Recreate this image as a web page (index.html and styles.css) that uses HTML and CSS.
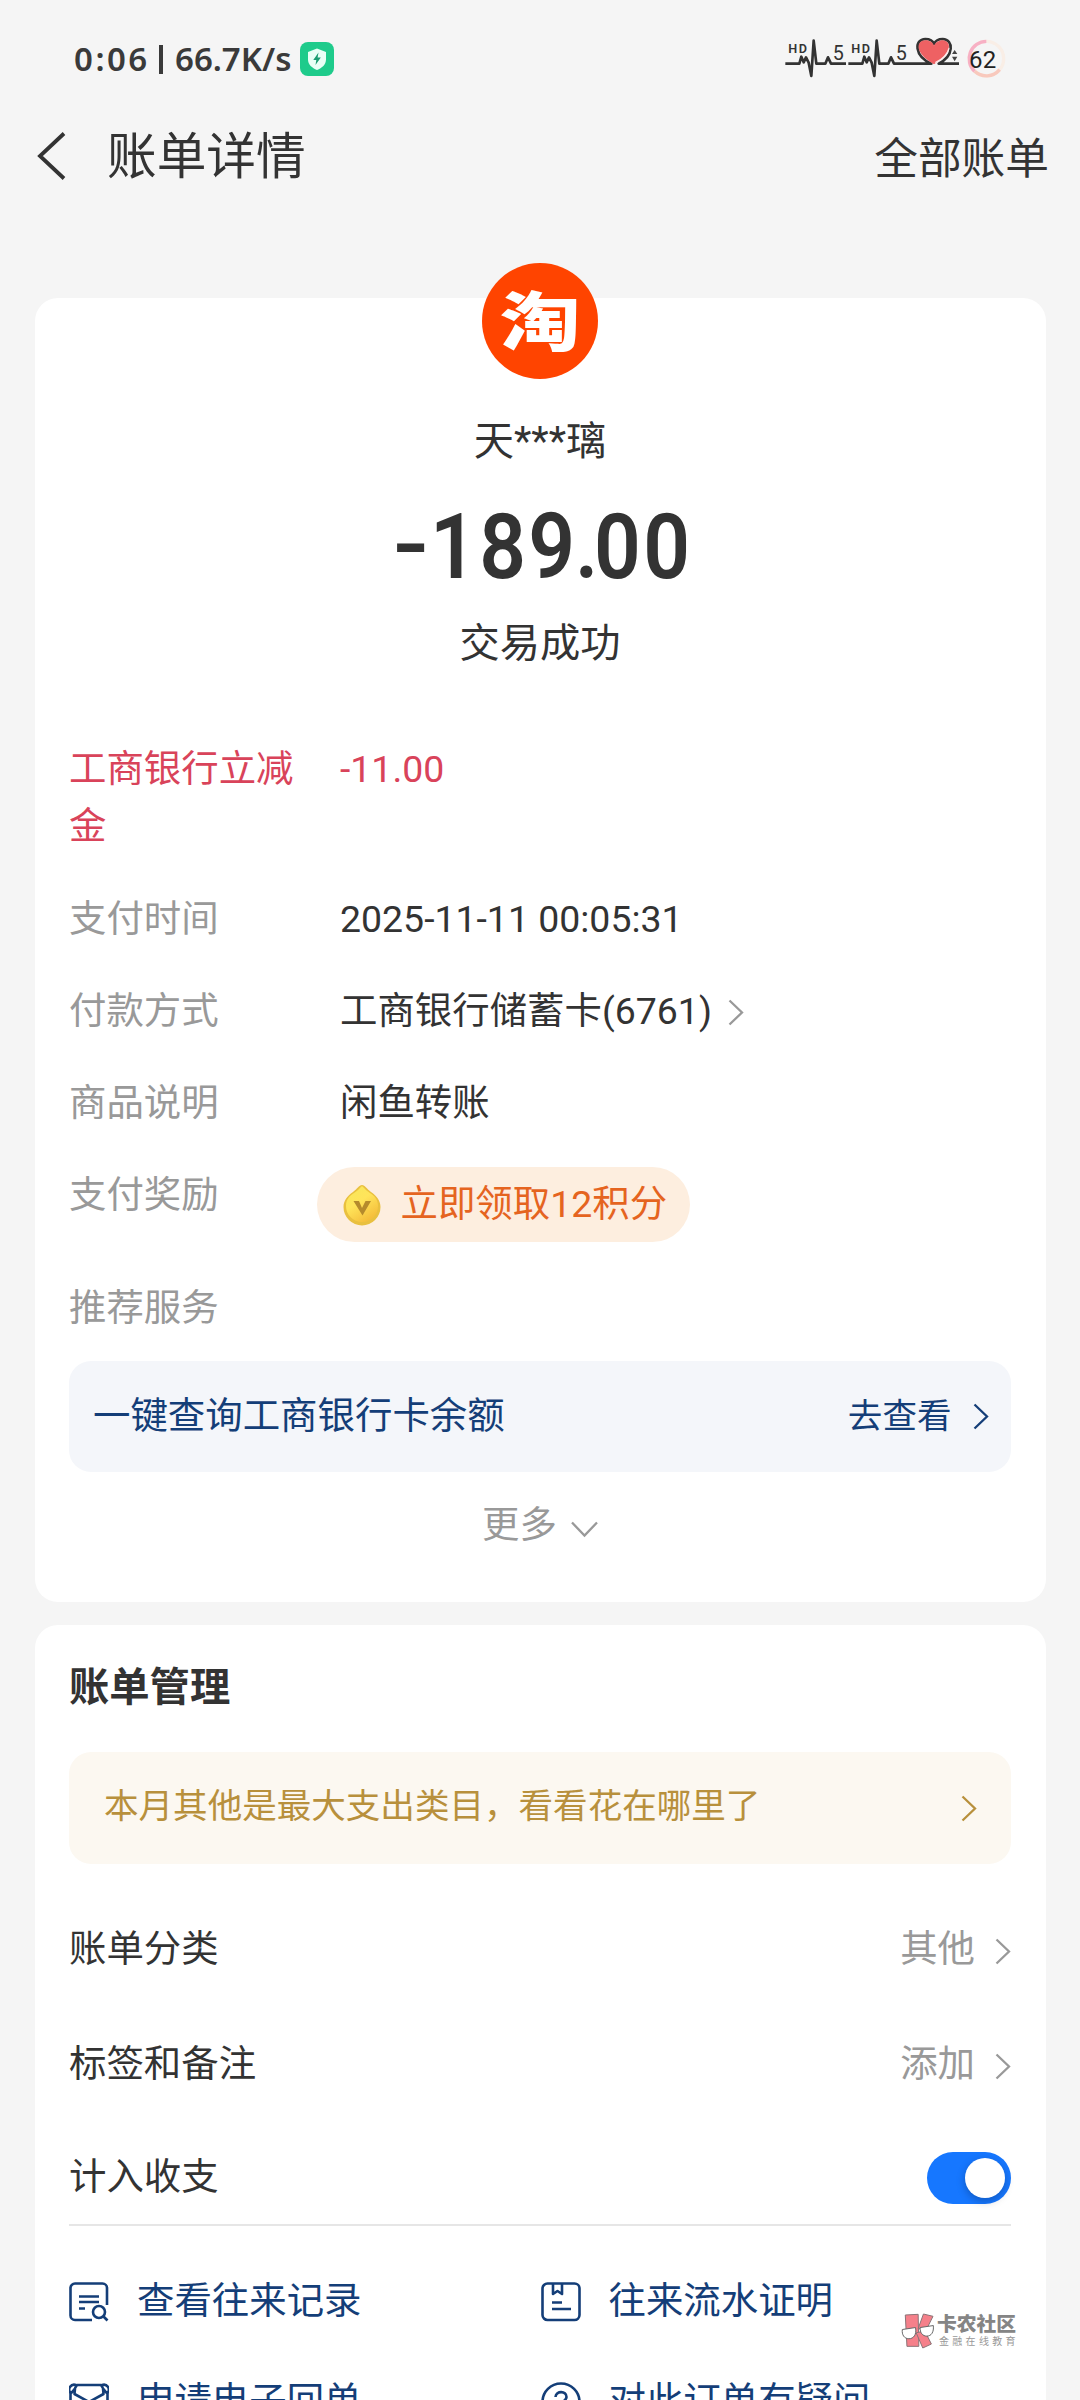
FILE: index.html
```html
<!DOCTYPE html>
<html lang="zh-CN">
<head>
<meta charset="utf-8">
<title>账单详情</title>
<link rel="stylesheet" href="styles.css">
</head>
<body>
<div class="screen">
  <div class="statusbar">
    <div class="status-left">
      <span class="clock">0:06</span><span class="sep"></span><span class="speed">66.7K/s</span>
      <svg class="shield" viewBox="0 0 34 34"><rect width="34" height="34" rx="8" fill="#1ecb8b"/><path d="M17 6.500L26 10V17.500C26 22.500 22 26 17 28C12 26 8 22.500 8 17.500V10Z" fill="#e9fff6"/><path d="M18.500 10.500L13.300 18H16.300L15.500 23L20.800 15.600H17.600Z" fill="#1a9d72"/></svg>
    </div>
    <svg class="signals" viewBox="120 90 690 159">
      <g fill="none" stroke="#333" stroke-width="8" stroke-linejoin="round">
        <path d="M136 191H178L184 170L191 187L198 172L206 188L214 228L221 122L229 191H256L264 172L273 191H318"/>
        <path d="M325 191H367L373 170L380 187L387 172L395 188L403 228L410 122L418 191H445L453 172L462 191H574C522 168 522 118 556 117C570 117 579 124 582 132C586 123 597 117 608 117C642 119 642 168 596 191H657"/>
      </g>
      <path d="M582 193C520 158 530 121 556 121C570 121 579 128 582 137C586 128 597 121 608 121C634 123 640 156 582 193Z" fill="#ee6163"/>
      <path d="M586 188C606 178 623 162 627 145" fill="none" stroke="#ffe9e9" stroke-width="4"/>
      <path d="M636 162L644 150L652 162ZM636 170H652L644 184Z" fill="#444"/>
      <g fill="none" stroke-width="10">
        <circle cx="739" cy="176" r="52" stroke="#f9eee6"/>
        <path d="M739 124A52 52 0 0 0 704 214" stroke="#f7b0c4"/>
        <path d="M704 214A52 52 0 0 0 779 209" stroke="#f8c9bd"/>
      </g>
      <g class="signal-text" fill="#333"><text x="145" y="159" font-size="38" font-weight="600" textLength="56">HD</text><text x="334" y="159" font-size="38" font-weight="600" textLength="56">HD</text><text x="278" y="181" font-size="59">5</text><text x="467" y="181" font-size="59">5</text><text x="687" y="204" font-size="72" fill="#222" textLength="82">62</text></g>
    </svg>
  </div>

  <div class="navbar">
    <svg class="back" viewBox="0 0 29 48"><path d="M27 1.500L3 24L27 46.500" fill="none" stroke="#333" stroke-width="3.800"/></svg>
    <h1 class="nav-title">账单详情</h1>
    <span class="nav-all">全部账单</span>
  </div>

  <section class="card bill">
    <div class="merchant-logo"><span>淘</span></div>
    <div class="merchant">天***璃</div>
    <div class="amount"><span class="minus">-</span><span class="digits">189</span><span class="dot">.</span><span class="digits">00</span></div>
    <div class="state">交易成功</div>

    <div class="details">
      <div class="row discount"><span class="label">工商银行立减金</span><span class="value">-11.00</span></div>
      <div class="row"><span class="label">支付时间</span><span class="value">2025-11-11 00:05:31</span></div>
      <div class="row"><span class="label">付款方式</span><span class="value">工商银行储蓄卡(6761)</span><svg class="chev gray pay-chev" viewBox="0 0 16 27"><path d="M1.500 1.500L14 13.500L1.500 25.500"/></svg></div>
      <div class="row"><span class="label">商品说明</span><span class="value">闲鱼转账</span></div>
      <div class="row reward"><span class="label">支付奖励</span>
        <div class="pill">
          <svg class="coin" viewBox="0 0 38 42"><defs><linearGradient id="gold" x1="0" y1="0" x2="0.600" y2="1"><stop offset="0" stop-color="#f6e75b"/><stop offset=".5" stop-color="#ffe45a"/><stop offset="1" stop-color="#f5bf3c"/></linearGradient></defs><path d="M19 1C22 1 24 5 28 8C34 12 37.500 17 37.500 23A18.500 18.500 0 0 1 .5 23C.5 17 4 12 10 8C14 5 16 1 19 1Z" fill="#e9c03f"/><path d="M19 2C22 5 24 7 27 9C32 12 35 16 35 22A16 16 0 0 1 3 22C3 16 6 12 11 9C14 7 16 5 19 2Z" fill="url(#gold)"/><path d="M10.500 17H16L19 24L22.500 17H28L19.500 31.500Z" fill="#b58a2c"/></svg>
          <span>立即领取12积分</span>
        </div>
      </div>
      <div class="row"><span class="label">推荐服务</span></div>
    </div>
    <div class="banner balance"><span class="balance-text">一键查询工商银行卡余额</span><span class="go">去查看</span><svg class="chev navy" viewBox="0 0 16 27"><path d="M1.500 1.500L14 13.500L1.500 25.500"/></svg></div>
    <div class="more"><span>更多</span><svg class="down" viewBox="0 0 27 17"><path d="M1 1.500L13.500 14.500L26 1.500"/></svg></div>
  </section>

  <section class="card manage">
    <h2 class="manage-title">账单管理</h2>
    <div class="banner insight"><span>本月其他是最大支出类目，看看花在哪里了</span><svg class="chev golden" viewBox="0 0 16 27"><path d="M1.500 1.500L14 13.500L1.500 25.500"/></svg></div>
    <div class="setting"><span>账单分类</span><span class="setting-value">其他</span><svg class="chev gray" viewBox="0 0 16 27"><path d="M1.500 1.500L14 13.500L1.500 25.500"/></svg></div>
    <div class="setting"><span>标签和备注</span><span class="setting-value">添加</span><svg class="chev gray" viewBox="0 0 16 27"><path d="M1.500 1.500L14 13.500L1.500 25.500"/></svg></div>
    <div class="setting last"><span>计入收支</span><span class="switch"><span class="knob"></span></span></div>
    <div class="links">
      <div class="link"><svg viewBox="0 0 40 40"><path d="M38 23V6A4.500 4.500 0 0 0 33.500 1.500H6A4.500 4.500 0 0 0 1.500 6V33.500A4.500 4.500 0 0 0 6 38H23M10 14.500H30M10 20H30M10 26.500H16"/><circle cx="30" cy="30" r="6"/><path d="M34.500 34.500L38.500 38.500"/></svg><span>查看往来记录</span></div>
      <div class="link"><svg viewBox="0 0 40 40"><rect x="1.500" y="1.500" width="37" height="36.500" rx="5"/><path d="M12 2V12L16.500 9L21 12V2M11 20.500H21M11 27H30"/></svg><span>往来流水证明</span></div>
      <div class="link"><svg viewBox="0 0 40 40"><path d="M6 6L8 3H32L34 6M1.500 12L6 6.500L5.500 12L20 20L34.500 12L34 6.500L38.500 12M1.500 9V33A4 4 0 0 0 5.500 37H34.500A4 4 0 0 0 38.500 33V9M1.500 11A5 5 0 0 1 7 3M38.500 11A5 5 0 0 0 33 3"/></svg><span>申请电子回单</span></div>
      <div class="link"><svg viewBox="0 0 40 40"><circle cx="20" cy="20" r="18.500"/><path d="M14.500 15C15 8.500 25.500 8.500 25.500 15C25.500 19 20 19 20 24M20 28V31"/></svg><span>对此订单有疑问</span></div>
    </div>
  </section>

  <div class="watermark">
    <svg viewBox="0 0 100 105"><g fill="#f5808a" stroke="#8a7376" stroke-width="3"><path d="M13 4L52 2L54 99L18 99Z"/><path d="M68 1L97 8L76 50L52 45Z"/><path d="M46 58L72 52L92 92L66 104Z"/></g><g fill="#fff" stroke="#666" stroke-width="3"><path d="M4 48L44 42C48 64 38 76 24 76C10 76 2 64 4 48Z"/><path d="M58 42L98 36C100 56 92 68 78 68C66 68 57 58 58 42Z"/></g></svg>
    <div><div class="wm-name">卡农社区</div><div class="wm-sub">金融在线教育</div></div>
  </div>
</div>
</body>
</html>
```
FILE: styles.css
```css
* { box-sizing: border-box; }
body {
  margin: 0;
  background: #f5f5f5;
  color: #333;
  font-family: Roboto, "Noto Sans CJK SC", sans-serif;
  font-size: 37.440px;
  line-height: 57.600px;
}
svg { display: block; flex: none; }
.screen {
  position: relative;
  width: 1080px;
  height: 2400px;
  overflow: hidden;
}

.statusbar {
  display: flex;
  justify-content: space-between;
  height: 118px;
  padding: 0 70px 0 74px;
}
.status-left {
  display: flex;
  align-items: center;
  height: 118px;
  font-family: "Noto Sans", sans-serif;
  font-weight: 600;
  font-size: 33px;
  color: #3a3a3a;
}
.clock { width: 74px; letter-spacing: 2.500px; white-space: nowrap; }
.sep { width: 4px; height: 29px; margin: 0 12px 0 11px; background: #3a3a3a; }
.speed { width: 118px; white-space: nowrap; }
.shield { width: 34px; height: 34px; margin-left: 7px; }
.signals { width: 230px; height: 53px; margin-top: 30px; }
.signal-text { font-family: Roboto, sans-serif; }

.navbar {
  display: flex;
  align-items: center;
  height: 76px;
  padding: 0 31px 0 37px;
}
.back { width: 29px; height: 48px; }
.nav-title {
  flex: 1;
  margin: 4px 0 0 41px;
  font-size: 49.700px;
  font-weight: 400;
}
.nav-all { margin-top: 8px; font-size: 43.700px; }

.card {
  width: 1011px;
  margin: 0 auto;
  padding: 0 34.500px;
  border-radius: 23px;
  background: #fff;
}
.bill {
  display: flex;
  flex-direction: column;
  height: 1304px;
  margin-top: 104px;
}
.merchant-logo {
  display: flex;
  align-items: center;
  justify-content: center;
  align-self: center;
  width: 116px;
  height: 116px;
  margin-top: -35px;
  border-radius: 50%;
  background: #ff4400;
  color: #fff;
}
.merchant-logo span {
  margin-top: 5px;
  font-size: 64px;
  font-weight: 900;
  transform: scaleX(1.260);
}
.merchant {
  margin-top: 33.500px;
  font-size: 40.300px;
  text-align: center;
}
.amount {
  display: flex;
  justify-content: center;
  height: 90px;
  margin: 31.700px 0 0 7px;
  font-size: 91px;
  font-weight: 600;
  line-height: 90px;
}
.digits {
  width: 98px;
  letter-spacing: 2.600px;
  transform: scaleX(.9);
  transform-origin: 0 50%;
}
.minus + .digits { width: 146px; }
.dot { width: 19px; margin-left: -1px; transform: scaleX(.9); transform-origin: 0 50%; }
.minus { width: 37px; margin-left: -3px; font-weight: 500; transform: translateY(-3px) scaleX(1.150); transform-origin: 0 50%; }
.state { margin-top: 23px; font-size: 40.300px; text-align: center; }

.details {
  display: flex;
  flex-direction: column;
  gap: 34.560px;
  margin-top: 68.500px;
}
.row { display: flex; }
.label { width: 230px; margin-right: 41px; color: #999; }
.discount .label, .discount .value { color: #d9435a; }
.pay-chev { margin: 16px 0 0 16px; }
.reward { height: 78px; }
.pill {
  display: flex;
  align-items: center;
  width: 373px;
  height: 75px;
  margin: 0 0 0 -23.500px;
  padding-left: 26px;
  border-radius: 38px;
  background: #fdeedf;
  color: #e5641f;
}
.coin { width: 38px; height: 42px; margin: 1px 20px 0 0; }

.chev { width: 16px; height: 27px; }
.chev path, .down path { fill: none; stroke-width: 2.300; stroke: currentColor; }
.gray { color: #999; }
.navy { color: #143e78; }
.golden { color: #b8903c; }

.banner {
  display: flex;
  align-items: center;
  border-radius: 22px;
}
.balance {
  height: 110.500px;
  margin-top: 24px;
  padding: 0 22px 0 24px;
  background: #f4f6fa;
  color: #143e78;
}
.balance-text { flex: 1; }
.go { margin: 1px 21.500px 0 0; font-size: 34.560px; }
.more {
  display: flex;
  justify-content: center;
  align-items: center;
  margin-top: 25px;
  color: #999;
}
.down { width: 27px; height: 17px; margin: 8px 0 0 14px; }

.manage {
  height: 800px;
  margin-top: 23px;
  padding-top: 34px;
}
.manage-title { margin: 0; font-size: 40.300px; font-weight: 700; }
.insight {
  justify-content: space-between;
  height: 112.300px;
  margin-top: 35.500px;
  margin-bottom: 28px;
  padding: 0 34px 0 35px;
  background: #fcf8f1;
  color: #b8903c;
  font-size: 34.560px;
}
.insight span { margin-top: -2px; }
.setting { display: flex; align-items: center; height: 115.200px; }
.setting-value { margin-left: auto; margin-right: 20px; color: #999; }
.setting .chev { margin-top: 3px; }
.last {
  justify-content: space-between;
  height: 103px;
  padding: 12px 0 2px;
  border-bottom: 2px solid #e6e6e6;
}
.switch {
  display: flex;
  justify-content: flex-end;
  width: 84px;
  height: 52px;
  padding: 6px;
  border-radius: 26px;
  background: #1677ff;
}
.knob { width: 40px; height: 40px; border-radius: 50%; background: #fff; box-shadow: 0 3px 8px rgba(0, 0, 0, .25); }

.links {
  display: grid;
  grid-template-columns: 471.500px 1fr;
  row-gap: 42px;
  padding-top: 47.500px;
  color: #143e78;
}
.link { display: flex; align-items: center; gap: 28px; white-space: nowrap; }
.link svg { width: 40px; height: 40px; fill: none; stroke: #143e78; stroke-width: 2.600; stroke-linejoin: round; }

.watermark {
  position: absolute;
  left: 901px;
  top: 2312.500px;
  display: flex;
  gap: 3px;
  color: #858585;
}
.watermark svg { width: 33px; height: 36px; }
.wm-name { font-size: 19.800px; font-weight: 900; line-height: 24px; }
.wm-sub { padding-left: 2px; font-size: 10px; line-height: 12px; letter-spacing: 3.300px; margin-top: -1px; white-space: nowrap; color: #999; }
```
